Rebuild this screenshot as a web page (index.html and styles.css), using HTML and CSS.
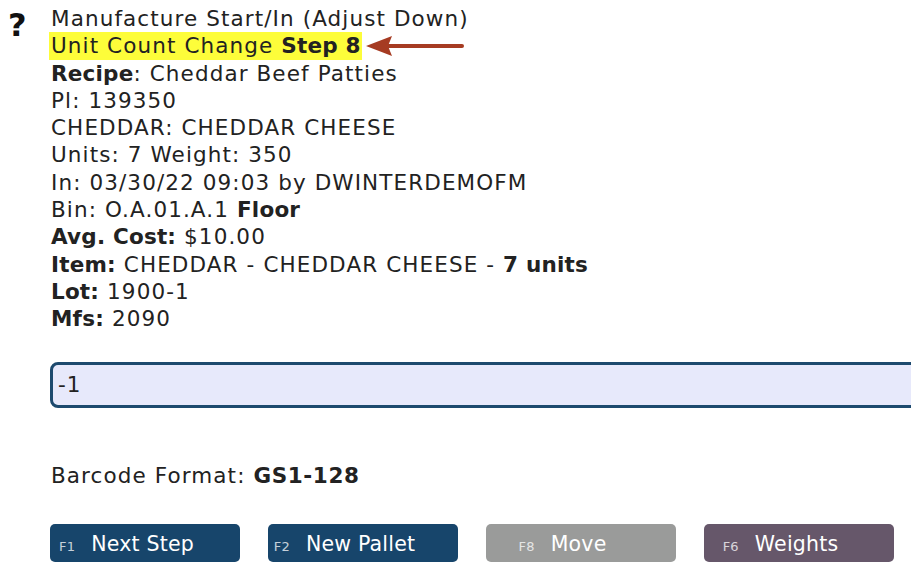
FILE: index.html
```html
<!DOCTYPE html>
<html lang="en">
<head>
    <meta charset="UTF-8">
    <meta name="viewport" content="width=device-width, initial-scale=1.0">
    <title>Unit Count Change</title>
    <link rel="stylesheet" href="styles.css">
</head>
<body>
    <div class="page">
        <div class="help">?</div>
        <div class="main">
            <div class="info">
                <div>Manufacture Start/In (Adjust Down)</div>
                <div class="stepLine">
                    <span class="highlight">Unit Count Change <b>Step 8</b></span>
                    <svg class="arrow" width="98" height="22" viewBox="0 0 98 22">
                        <path d="M22 11 H96" stroke="#a63b22" stroke-width="4" stroke-linecap="round"/>
                        <path d="M0 11 L26 1 L22 11 L26 21 Z" fill="#a63b22"/>
                    </svg>
                </div>
                <div><b>Recipe</b>: Cheddar Beef Patties</div>
                <div>Pl: 139350</div>
                <div>CHEDDAR: CHEDDAR CHEESE</div>
                <div>Units: 7 Weight: 350</div>
                <div>In: 03/30/22 09:03 by DWINTERDEMOFM</div>
                <div>Bin: O.A.01.A.1 <b>Floor</b></div>
                <div><b>Avg. Cost:</b> $10.00</div>
                <div><b>Item:</b> CHEDDAR - CHEDDAR CHEESE - <b>7 units</b></div>
                <div><b>Lot:</b> 1900-1</div>
                <div><b>Mfs:</b> 2090</div>
            </div>

            <input type="text" id="entry" class="entry" value="-1">

            <div class="barcode">Barcode Format: <b>GS1-128</b></div>

            <div class="buttons">
                <button class="btn btnBlue"><span class="key">F1</span>Next Step</button>
                <button class="btn btnBlue"><span class="key">F2</span>New Pallet</button>
                <button class="btn btnGray"><span class="key">F8</span>Move</button>
                <button class="btn btnPurple"><span class="key">F6</span>Weights</button>
            </div>
        </div>
    </div>
</body>
</html>
```

FILE: styles.css
```css
body {
    margin: 0;
    background-color: white;
    font-family: "DejaVu Sans", Verdana, sans-serif;
    color: #222;
    overflow: hidden;
}
.page {
    display: flex;
    padding-top: 5px;
}
.help {
    width: 51px;
    padding-left: 8px;
    box-sizing: border-box;
    font-size: 32px;
    font-weight: bold;
    line-height: 40px;
    color: #111;
    flex-shrink: 0;
}
.main {
    flex: 1;
    min-width: 0;
}
.info {
    font-size: 21.5px;
    line-height: 27.3px;
    letter-spacing: 1.1px;
}
.info b {
    letter-spacing: 0.2px;
}
.stepLine {
    display: flex;
    align-items: center;
}
.highlight {
    background-color: #fdfd3a;
    padding: 0 1px 0 0;
    margin-left: -2px;
    padding-left: 2px;
}
.arrow {
    margin-left: 4px;
}
.entry {
    display: block;
    box-sizing: border-box;
    width: 900px;
    height: 46px;
    margin: 29px 0 0 -1px;
    padding: 0 5px;
    font-family: "DejaVu Sans", Verdana, sans-serif;
    font-size: 21.5px;
    letter-spacing: 1px;
    color: #222;
    background-color: #e7e9fb;
    border: 3px solid #1d4a6e;
    border-radius: 8px;
    outline: none;
}
.barcode {
    margin-top: 55px;
    font-size: 21.5px;
    letter-spacing: 1.1px;
}
.barcode b {
    letter-spacing: 0.6px;
}
.buttons {
    display: flex;
    gap: 28px;
    margin: 36px 0 0 -1px;
}
.btn {
    width: 190px;
    height: 38px;
    padding: 2px 37px 0 0;
    border: none;
    border-radius: 5px;
    font-family: "DejaVu Sans", Verdana, sans-serif;
    font-size: 20.5px;
    letter-spacing: 0.2px;
    color: white;
    text-align: center;
    cursor: pointer;
}
.key {
    font-size: 13px;
    margin-right: 16px;
    opacity: 0.75;
}
.btnBlue {
    background-color: #17456b;
}
.btnGray {
    background-color: #9a9b9a;
}
.btnPurple {
    background-color: #66576a;
}
```
